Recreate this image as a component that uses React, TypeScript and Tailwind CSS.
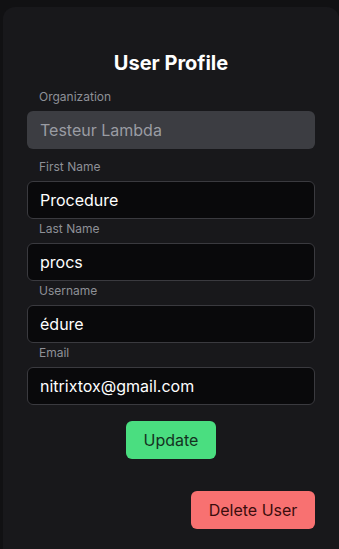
import React from 'react';

const fields = [
  { label: 'First Name', value: 'Procedure' },
  { label: 'Last Name', value: 'procs' },
  { label: 'Username', value: 'édure' },
  { label: 'Email', value: 'nitrixtox@gmail.com' },
];

export default function App() {
  return (
    <div className="min-h-[549px] bg-[#111113] pt-[7px] pl-[3px] font-['Inter',sans-serif]">
      <div className="min-h-[542px] rounded-t-xl bg-[#18181b] pl-6 pr-[24px] pt-[42px]">
        <h1 className="text-center text-xl font-bold leading-7 text-white">User Profile</h1>

        <div className="mt-3">
          <label className="block pl-3 text-xs leading-4 text-[#8e9097]">Organization</label>
          <div className="mt-1.5 flex h-[38px] items-center rounded-md bg-[#3c3d42] px-[13px] text-base text-[#9a9ca3]">
            Testeur Lambda
          </div>
        </div>

        <div className="mt-[10px] flex flex-col gap-[2px]">
          {fields.map((f) => (
            <div key={f.label}>
              <label className="block pl-3 text-xs leading-4 text-[#8e9097]">{f.label}</label>
              <div className="mt-[6px] flex h-[38px] items-center rounded-md border border-[#3a3a3f] bg-[#09090b] px-3 text-base text-white">
                {f.value}
              </div>
            </div>
          ))}
        </div>

        <div className="mt-4 flex justify-center">
          <button className="h-[38px] w-[90px] rounded-md bg-[#4ade80] text-base text-[#14321f]">Update</button>
        </div>

        <div className="mt-8 flex justify-end">
          <button className="h-[38px] w-[124px] rounded-md bg-[#f87171] text-base text-[#3b0d0d]">Delete User</button>
        </div>
      </div>
    </div>
  );
}
